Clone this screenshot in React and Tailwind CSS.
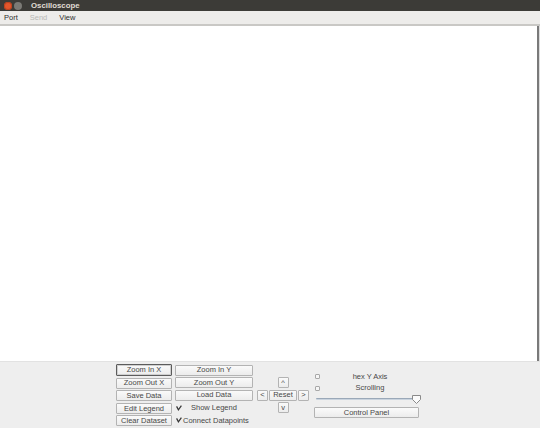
import React from 'react';

const font = { fontFamily: '"Liberation Sans", Arial, sans-serif' };

const Btn = ({ children, className = '', focused = false }) => (
  <div
    className={`flex items-center justify-center rounded-[1px] bg-[linear-gradient(180deg,#fafafa_0%,#ececec_100%)] text-[7.5px] leading-none text-[#474747] ${
      focused ? 'border border-[#5c5c5c] shadow-[inset_0_0_0_1px_#cfcfcf]' : 'border border-[#b3b3b3]'
    } ${className}`}
  >
    {children}
  </div>
);

const Check = () => (
  <svg width="6" height="6" viewBox="0 0 6 6" className="shrink-0">
    <path d="M0.6 1.4 L2.4 4.8 L5.4 0.6" fill="none" stroke="#333" strokeWidth="1.2" />
  </svg>
);

const EmptyBox = () => (
  <div className="h-[5px] w-[5px] shrink-0 rounded-[1px] border border-[#a8a8a8] bg-[#f6f6f6]" />
);

const App = () => {
  return (
    <div className="flex h-[428px] w-[540px] flex-col overflow-hidden bg-white" style={font}>
      {/* title bar */}
      <div className="flex h-[11px] items-center bg-[#3c3b37]">
        <div className="ml-[4px] h-[8px] w-[8px] rounded-full bg-[#e2562c] shadow-[inset_0_0_0_1px_#b8421f]" />
        <div className="ml-[2px] h-[8px] w-[8px] rounded-full bg-[#7b7a75]" />
        <span className="ml-[9px] text-[7.8px] font-bold text-[#e0ddd5]">Oscilloscope</span>
      </div>

      {/* menu bar */}
      <div className="flex h-[13px] items-center bg-[#edecea] text-[7.5px]">
        <span className="ml-[4px] text-[#2e2e2e]">Port</span>
        <span className="ml-[12px] text-[#b9b9b6]">Send</span>
        <span className="ml-[12px] text-[#2e2e2e]">View</span>
      </div>
      <div className="h-[2px] bg-[#c9c8c5]" />

      {/* plot area */}
      <div className="flex flex-1">
        <div className="flex-1 bg-white" />
        <div className="w-[2px] bg-[#7a7a7a]" />
        <div className="w-[1px] bg-[#dcdcdc]" />
      </div>

      {/* control panel */}
      <div className="flex h-[67px] items-start border-t border-[#e2e2e2] bg-[#eeeeee] pl-[116px] pt-[2px]">
        <div className="flex w-[56px] flex-col gap-[1.6px]">
          <Btn focused className="h-[12px]">Zoom In X</Btn>
          <Btn className="h-[11px]">Zoom Out X</Btn>
          <Btn className="h-[11px]">Save Data</Btn>
          <Btn className="h-[11px]">Edit Legend</Btn>
          <Btn className="h-[11px]">Clear Dataset</Btn>
        </div>

        <div className="ml-[3px] flex w-[78px] flex-col gap-[1.6px] pt-[0.5px]">
          <Btn className="h-[11px]">Zoom In Y</Btn>
          <Btn className="h-[11px]">Zoom Out Y</Btn>
          <Btn className="h-[11px]">Load Data</Btn>
          <div className="flex h-[11px] items-center text-[7.5px] text-[#474747]">
            <span className="ml-[1px]"><Check /></span>
            <span className="ml-[9px]">Show Legend</span>
          </div>
          <div className="flex h-[11px] items-center text-[7.5px] text-[#474747]">
            <span className="ml-[1px]"><Check /></span>
            <span className="ml-[1px] whitespace-nowrap">Connect Datapoints</span>
          </div>
        </div>

        <div className="ml-[4px] flex w-[52px] flex-col items-center gap-[1.6px] pt-[13px]">
          <Btn className="h-[11px] w-[11px]">^</Btn>
          <div className="flex h-[11px] gap-[1px]">
            <Btn className="h-[11px] w-[11px]">&lt;</Btn>
            <Btn className="h-[11px] w-[28px]">Reset</Btn>
            <Btn className="h-[11px] w-[11px]">&gt;</Btn>
          </div>
          <Btn className="h-[11px] w-[11px]">v</Btn>
        </div>

        <div className="ml-[5px] flex w-[106px] flex-col pt-[7px] text-[7.5px] text-[#474747]">
          <div className="flex h-[11px] items-center pl-[1px]">
            <EmptyBox />
            <span className="flex-1 text-center">hex Y Axis</span>
          </div>
          <div className="flex h-[12px] items-center pl-[1px]">
            <EmptyBox />
            <span className="flex-1 text-center">Scrolling</span>
          </div>
          <div className="relative h-[11px]">
            <div className="absolute left-[2px] right-[4px] top-[4px] h-[2px] rounded-full border-t border-[#9aa8b8] bg-[#c9d3de]" />
            <svg className="absolute right-[-1px] top-[1px]" width="9" height="9" viewBox="0 0 9 9">
              <path d="M0.5 0.5 H8.5 V4.5 L4.5 8.5 L0.5 4.5 Z" fill="#fbfbfb" stroke="#8a8a8a" strokeWidth="1" />
            </svg>
          </div>
          <Btn className="mt-[2px] h-[11px] w-[105px]">Control Panel</Btn>
        </div>
      </div>
    </div>
  );
};

export default App;
